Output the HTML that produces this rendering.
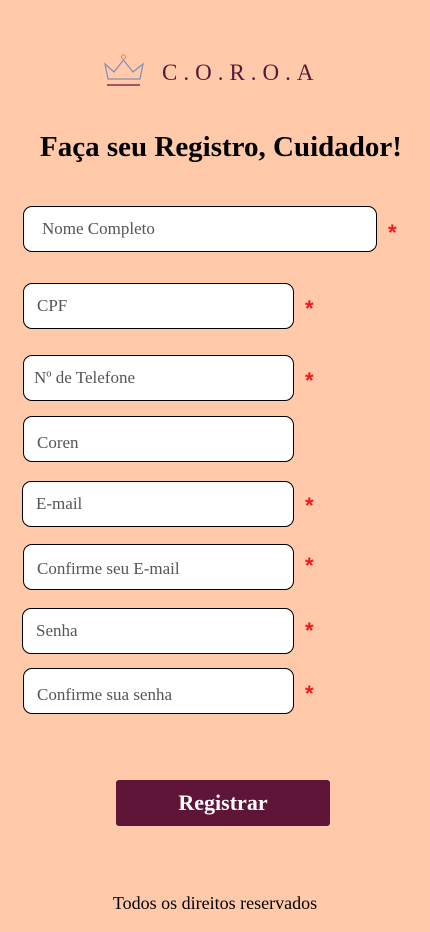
<!DOCTYPE html>
<html><head><meta charset="utf-8"><style>
body{margin:0;width:430px;height:932px;background:#FFC9AA;position:relative;font-family:"Liberation Serif",serif;overflow:hidden}
.f{position:absolute;background:#fff;border:1px solid #000;border-radius:9px;box-sizing:border-box;height:46px;color:#555;font-size:17px;line-height:44px;padding-left:13px}
.a{position:absolute;color:#f01818;font-size:22px;font-weight:bold;font-family:"Liberation Sans",sans-serif}
</style></head><body>
<svg style="position:absolute;left:103px;top:54px" width="42" height="36" viewBox="0 0 42 36">
<circle cx="20.5" cy="3" r="2" fill="none" stroke="#d88" stroke-width="1"/>
<path d="M2 10 L11 18 L20.5 6 L30 18 L40 10 L37 25 L5 25 Z" fill="none" stroke="#7f8fb5" stroke-width="1.2"/>
<line x1="4" y1="31" x2="37" y2="31" stroke="#8a2a4a" stroke-width="1.5"/>
</svg>
<div style="position:absolute;left:162px;top:60px;font-size:23px;letter-spacing:6px;color:#5E1538">C.O.R.O.A</div>
<div style="position:absolute;left:40px;top:131px;font-size:29px;font-weight:bold;color:#000;white-space:nowrap">Faça seu Registro, Cuidador!</div>
<div class="f" style="left:23px;top:206px;width:354px;padding-left:18px">Nome Completo</div><div class="a" style="left:388px;top:220px">*</div>
<div class="f" style="left:23px;top:283px;width:271px">CPF</div><div class="a" style="left:305px;top:296px">*</div>
<div class="f" style="left:23px;top:355px;width:271px;padding-left:10px">Nº de Telefone</div><div class="a" style="left:305px;top:368px">*</div>
<div class="f" style="left:23px;top:416px;width:271px;line-height:52px">Coren</div>
<div class="f" style="left:22px;top:481px;width:272px">E-mail</div><div class="a" style="left:305px;top:493px">*</div>
<div class="f" style="left:23px;top:544px;width:271px;line-height:48px">Confirme seu E-mail</div><div class="a" style="left:305px;top:553px">*</div>
<div class="f" style="left:22px;top:608px;width:272px">Senha</div><div class="a" style="left:305px;top:618px">*</div>
<div class="f" style="left:23px;top:668px;width:271px;line-height:52px">Confirme sua senha</div><div class="a" style="left:305px;top:681px">*</div>
<div style="position:absolute;left:116px;top:780px;width:214px;height:46px;background:#5E1538;border-radius:3px;color:#fff;font-weight:bold;font-size:22px;text-align:center;line-height:46px">Registrar</div>
<div style="position:absolute;left:0;width:430px;top:893px;text-align:center;font-size:18px;color:#000">Todos os direitos reservados</div>
</body></html>
